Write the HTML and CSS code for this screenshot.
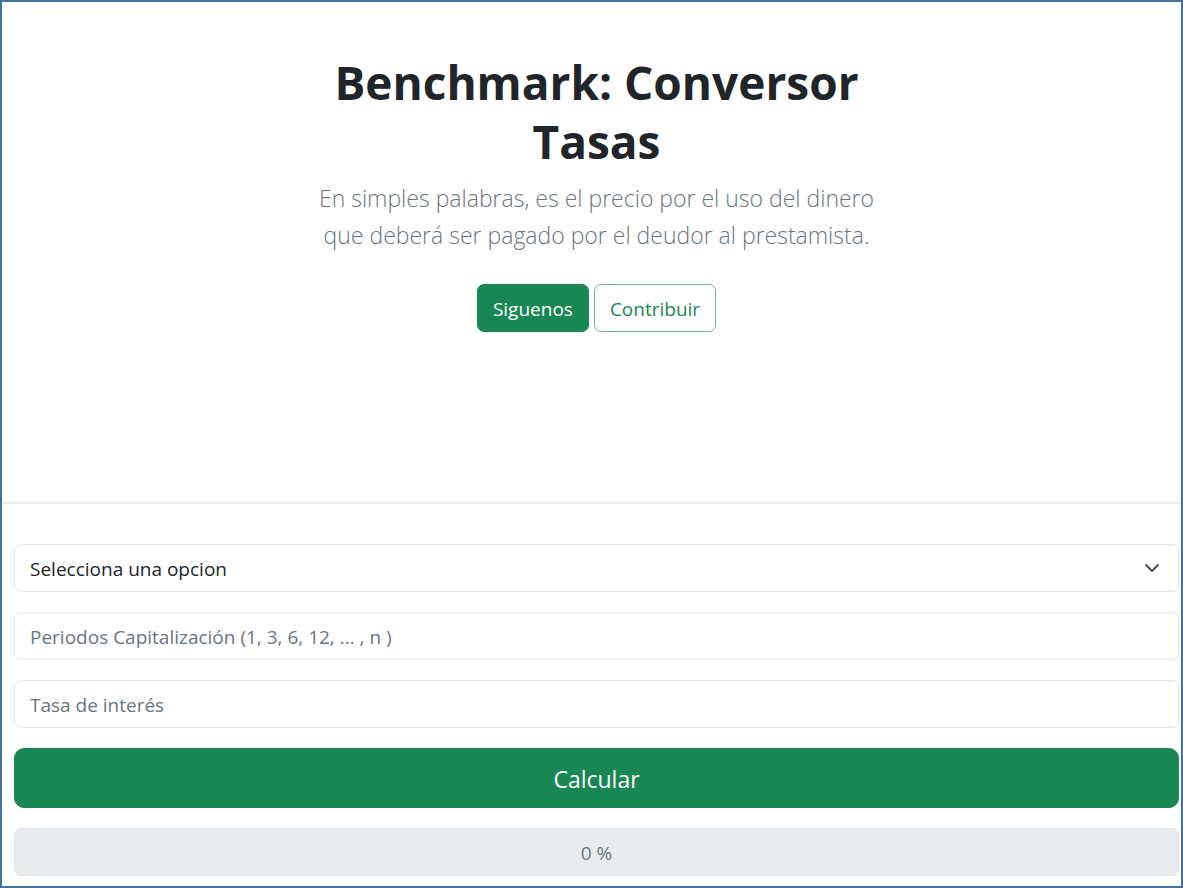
FILE: index.html
```html
<!DOCTYPE html>
<html lang="es">
<head>
<meta charset="utf-8">
<meta name="viewport" content="width=device-width, initial-scale=1">
<title>Benchmark: Conversor Tasas</title>
<link rel="stylesheet" href="styles.css">
</head>
<body>
<main class="page">
  <section class="hero">
    <div class="hero-content">
      <h1 class="title">Benchmark: Conversor Tasas</h1>
      <p class="lead">En simples palabras, es el precio por el uso del dinero que deberá ser pagado por el deudor al prestamista.</p>
      <div class="actions">
        <a class="btn btn-solid" href="#siguenos">Siguenos</a>
        <a class="btn btn-outline" href="#contribuir">Contribuir</a>
      </div>
    </div>
  </section>
  <form class="converter">
    <select class="field select" aria-label="Opcion">
      <option>Selecciona una opcion</option>
    </select>
    <input class="field" type="text" aria-label="Periodos Capitalización" placeholder="Periodos Capitalización (1, 3, 6, 12, ... , n )">
    <input class="field" type="text" aria-label="Tasa de interés" placeholder="Tasa de interés">
    <button class="submit" type="button">Calcular</button>
    <input class="field result" type="text" aria-label="Resultado" placeholder="0 %" disabled>
  </form>
</main>
</body>
</html>
```
FILE: styles.css
```css
* {
  box-sizing: border-box;
}

body {
  margin: 0;
  background: #fff;
  color: #212529;
  font-family: "Open Sans", "Noto Sans", sans-serif;
  font-size: 19px;
  line-height: 30px;
}

.page {
  min-height: 100vh;
  border: 2px solid #41719c;
}

.hero {
  padding: 51px 2px 170px 12px;
  border-bottom: 2px solid #e9eaec;
}

.hero-content {
  max-width: 580px;
  margin: 0 auto;
  text-align: center;
}

.title {
  margin: 0 0 9px;
  font-size: 46px;
  font-weight: 700;
  line-height: 59px;
}

.lead {
  margin: 0 0 30px;
  color: #6c757d;
  font-size: 23px;
  font-weight: 300;
  line-height: 37px;
}

.actions {
  display: flex;
  justify-content: center;
  gap: 5px;
}

.btn {
  padding: 9px 15px 7px;
  border: 1px solid #198754;
  border-radius: 7px;
  text-decoration: none;
}

.btn-solid {
  background: #198754;
  color: #fff;
}

.btn-outline {
  border-color: #75b798;
  color: #198754;
}

.converter {
  display: flex;
  flex-direction: column;
  gap: 20px;
  padding: 40px 2px 8px 12px;
}

.field {
  width: 100%;
  height: 48px;
  padding: 2px 15px 0;
  border: 1px solid #e3e6ea;
  border-radius: 7px;
  background: #fff;
  color: #212529;
  font: inherit;
}

.field::placeholder {
  color: #6c757d;
  opacity: 1;
}

.select {
  appearance: none;
  background: #fff url("data:image/svg+xml,%3Csvg xmlns='http://www.w3.org/2000/svg' viewBox='0 0 16 16'%3E%3Cpath fill='none' stroke='%23495057' stroke-linecap='round' stroke-linejoin='round' stroke-width='2' d='m2 5 6 6 6-6'/%3E%3C/svg%3E") no-repeat right 18px center / 16px 16px;
}

.submit {
  height: 60px;
  padding: 2px 20px 0;
  border: 1px solid #198754;
  border-radius: 10px;
  background: #198754;
  color: #fff;
  font: inherit;
  font-size: 23px;
}

.result {
  background: #e9ecef;
  border-color: #e0e4e8;
  text-align: center;
}
```
